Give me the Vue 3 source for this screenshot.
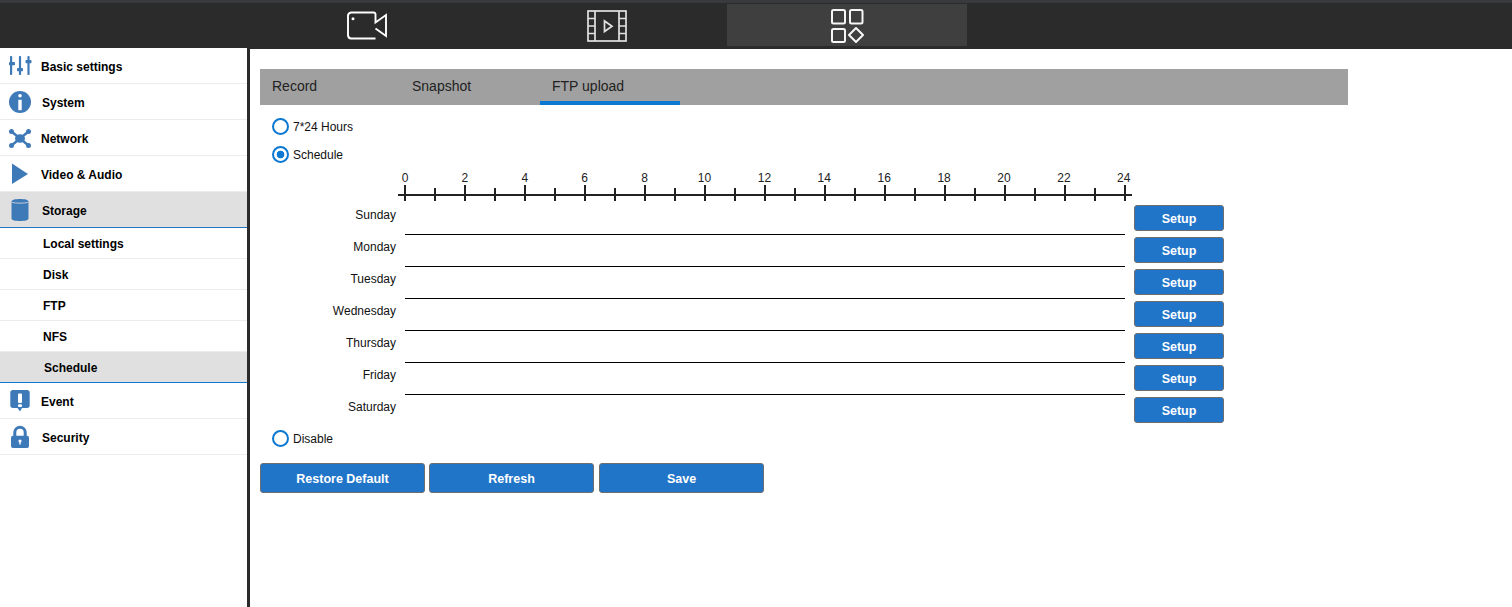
<script setup>
const days = ['Sunday', 'Monday', 'Tuesday', 'Wednesday', 'Thursday', 'Friday', 'Saturday']
const hours = Array.from({ length: 25 }, (_, i) => i)
const tabs = ['Record', 'Snapshot', 'FTP upload']
const subItems = [
  { label: 'Local settings' },
  { label: 'Disk' },
  { label: 'FTP' },
  { label: 'NFS' },
  { label: 'Schedule', active: true }
]
</script>

<template>
  <div class="page">
    <header class="topbar">
      <div class="topnav">
        <div class="navcell">
          <svg width="42" height="30" viewBox="0 0 42 30" fill="none" stroke="#fff" stroke-width="1.900">
            <path d="M29.500 28.500H5a3.500 3.500 0 0 1-3-3V5.500a3.500 3.500 0 0 1 3-3h22.500a2 2 0 0 1 2 2v8L40 5v21l-10.500-7.500" />
            <circle cx="7" cy="8.700" r="1.500" fill="#fff" stroke="none" />
          </svg>
        </div>
        <div class="navcell">
          <svg class="film" width="40" height="32" viewBox="0 0 40 32" fill="none" stroke="#e2e2e2" stroke-width="1.700">
            <rect x="1" y="1" width="38" height="30" />
            <path d="M8 1v30M32 1v30M1 8.500h7M1 16h7M1 23.500h7M32 8.500h7M32 16h7M32 23.500h7" />
            <path d="M17.500 11v10.500l7.500-5.250z" />
          </svg>
        </div>
        <div class="navcell navcell-active">
          <svg width="36" height="36" viewBox="0 0 36 36" fill="none" stroke="#f6f6f6" stroke-width="2">
            <rect x="3" y="3" width="13" height="13.500" rx="1.500" />
            <rect x="21" y="3" width="12.500" height="13.500" rx="1.500" />
            <rect x="3" y="22" width="13" height="13" rx="1.500" />
            <path d="M27 21l7 7-7 7-7-7z" stroke-linejoin="round" />
          </svg>
        </div>
      </div>
    </header>

    <div class="body">
      <aside class="sidebar">
        <div class="item">
          <svg class="icon" width="24" height="24" viewBox="0 0 24 24" fill="#3f7ab8">
            <rect x="2" y="2" width="2.200" height="19" rx=".8" />
            <rect x="10.900" y="2" width="2.200" height="19" rx=".8" />
            <rect x="19.400" y="2" width="2.200" height="19" rx=".8" />
            <rect x="1" y="8" width="6" height="3.200" rx=".8" /><rect x="9" y="14" width="6" height="3.200" rx=".8" /><rect x="17.500" y="6" width="6" height="3.200" rx=".8" />
          </svg>
          <span>Basic settings</span>
        </div>
        <div class="item">
          <svg class="icon" width="24" height="24" viewBox="0 0 24 24">
            <circle cx="12" cy="12" r="11" fill="#3f7ab8" />
            <circle cx="12" cy="5.800" r="1.800" fill="#fff" />
            <rect x="10.300" y="9.800" width="3.400" height="10.400" fill="#fff" />
          </svg>
          <span class="nudge">System</span>
        </div>
        <div class="item">
          <svg class="icon" width="24" height="24" viewBox="0 0 24 24" fill="#3f7ab8" stroke="#3f7ab8">
            <path d="M3.500 5.500l17 14M20.500 5.500l-17 14" stroke-width="2.400" />
            <ellipse cx="12" cy="12.500" rx="5" ry="4.300" stroke="none" />
            <circle cx="3.500" cy="5.500" r="2.500" stroke="none" /><circle cx="20.500" cy="5.500" r="2.500" stroke="none" />
            <circle cx="3.500" cy="19.500" r="2.500" stroke="none" /><circle cx="20.500" cy="19.500" r="2.500" stroke="none" />
          </svg>
          <span>Network</span>
        </div>
        <div class="item">
          <svg class="icon" width="24" height="24" viewBox="0 0 24 24" fill="#3f7ab8">
            <path d="M4 1.500L20 12 4 22z" />
          </svg>
          <span>Video &amp; Audio</span>
        </div>
        <div class="item item-open">
          <svg class="icon" width="24" height="24" viewBox="0 0 24 24" fill="#3f7ab8">
            <path d="M3.500 3.500c0-1.700 3.800-2.500 8.500-2.500s8.500.8 8.500 2.500v17c0 1.700-3.500 2.500-8.500 2.500s-8.500-.8-8.500-2.500z" />
            <path d="M3.500 4c1.500 1.500 15.500 1.500 17 0" fill="none" stroke="#e0e0e0" stroke-width=".8" />
          </svg>
          <span class="nudge">Storage</span>
        </div>
        <div
          v-for="sub in subItems"
          :key="sub.label"
          class="subitem"
          :class="{ 'subitem-active': sub.active }"
        >{{ sub.label }}</div>
        <div class="item">
          <svg class="icon" width="24" height="24" viewBox="0 0 24 24" fill="#3f7ab8">
            <path d="M5 1h14a2.700 2.700 0 0 1 2.700 2.700v12.600a2.700 2.700 0 0 1-2.700 2.700h-5l-2 3.500-2.500-3.500H5a2.700 2.700 0 0 1-2.700-2.700V3.700A2.700 2.700 0 0 1 5 1z" />
            <rect x="10" y="4.500" width="4" height="9.500" rx="1" fill="#fff" />
            <rect x="10" y="15.200" width="4" height="2.800" rx="1" fill="#fff" />
          </svg>
          <span>Event</span>
        </div>
        <div class="item">
          <svg class="icon" width="24" height="24" viewBox="0 0 24 24">
            <path d="M6.800 11.500V7.500a5.200 5.200 0 0 1 10.400 0v4" fill="none" stroke="#3f7ab8" stroke-width="3" />
            <rect x="3" y="10.700" width="18" height="12.300" rx="2" fill="#3f7ab8" />
            <circle cx="12" cy="16" r="1.600" fill="#fff" />
            <rect x="11.300" y="16" width="1.400" height="3.500" fill="#fff" />
          </svg>
          <span class="nudge">Security</span>
        </div>
      </aside>

      <main class="main">
        <nav class="tabs">
          <div
            v-for="(tab, i) in tabs"
            :key="tab"
            class="tab"
            :class="{ 'tab-active': i === 2 }"
          >{{ tab }}</div>
        </nav>

        <div class="options">
          <label class="radio"><span class="dot"></span>7*24 Hours</label>
          <label class="radio"><span class="dot dot-on"></span>Schedule</label>
        </div>

        <section class="schedule">
          <svg class="ruler" width="736" height="34" viewBox="0 0 736 34">
            <rect x="0" y="25" width="734" height="2" fill="#222" />
            <template v-for="h in hours" :key="h">
              <rect
                :x="6 + h * 30"
                :y="h % 2 ? 19 : 16"
                width="2"
                :height="h % 2 ? 13 : 16"
                fill="#222"
              />
              <text
                v-if="h % 2 === 0"
                :x="7 + h * 29.950"
                y="12.500"
                text-anchor="middle"
                class="hour"
              >{{ h }}</text>
            </template>
          </svg>

          <div v-for="day in days" :key="day" class="day">
            <div class="day-label">{{ day }}</div>
            <div class="day-track"></div>
            <button class="btn setup" type="button">Setup</button>
          </div>
        </section>

        <label class="radio"><span class="dot"></span>Disable</label>

        <div class="actions">
          <button class="btn action" type="button">Restore Default</button>
          <button class="btn action" type="button">Refresh</button>
          <button class="btn action action-last" type="button">Save</button>
        </div>
      </main>
    </div>
  </div>
</template>

<style scoped>
.page {
  width: 1512px;
  height: 607px;
  overflow: hidden;
  background: #fff;
  font-family: "Liberation Sans", Arial, sans-serif;
  color: #000;
}
.topbar {
  height: 48px;
  box-sizing: border-box;
  background: #2b2b2b;
  border-top: 3px solid #393a3e;
  padding-top: 1px;
}
.topnav {
  display: flex;
  padding-left: 247px;
}
.navcell {
  width: 240px;
  height: 42px;
  display: flex;
  align-items: center;
  justify-content: center;
}
.navcell-active {
  background: #3f3f3f;
}
.film {
  margin-top: 2px;
}
.body {
  display: flex;
  height: 559px;
}
.sidebar {
  width: 250px;
  flex: none;
  box-sizing: border-box;
  border-right: 3px solid #2b2b2b;
  background: #fff;
}
.item {
  height: 36px;
  box-sizing: border-box;
  display: flex;
  align-items: center;
  padding: 1px 0 0 8px;
  border-bottom: 1px solid #ececec;
  font-size: 12px;
  font-weight: 700;
}
.item span {
  margin: 2px 0 0 9px;
}
.item span.nudge {
  margin-left: 10px;
}
.item-open {
  background: #e0e0e0;
  border-bottom-color: #1f75c4;
}
.subitem {
  height: 31px;
  box-sizing: border-box;
  display: flex;
  align-items: center;
  padding: 1px 0 0 43px;
  border-bottom: 1px solid #ececec;
  font-size: 12px;
  font-weight: 700;
}
.subitem-active {
  background: #e0e0e0;
  border-bottom-color: #0c78d2;
  padding-left: 44px;
}
.main {
  flex: 1;
  border-top: 1px solid #2b2b2b;
  padding: 20px 0 0 10px;
  min-width: 0;
}
.tabs {
  width: 1088px;
  height: 36px;
  display: flex;
  background: #a0a0a0;
}
.tab {
  width: 140px;
  box-sizing: border-box;
  padding: 9px 0 0 12px;
  font-size: 14px;
  line-height: 16px;
  color: #222;
  border-bottom: 4px solid transparent;
}
.tab-active {
  border-bottom-color: #0c78d2;
}
.options {
  padding-top: 8px;
}
.radio {
  display: flex;
  align-items: center;
  height: 28px;
  padding-left: 12px;
  font-size: 12px;
  color: #111;
}
.dot {
  width: 17px;
  height: 17px;
  box-sizing: border-box;
  border: 2px solid #0c78d2;
  border-radius: 50%;
  margin: -1px 4px 0 0;
  flex: none;
  background: #fff;
}
.dot-on {
  background: radial-gradient(circle, #0c78d2 0 3.500px, #fff 4.200px);
}
.schedule {
  padding-left: 138px;
}
.ruler {
  display: block;
}
.hour {
  font-size: 12px;
  font-family: "Liberation Sans", Arial, sans-serif;
  fill: #222;
}
.day {
  display: flex;
  height: 32px;
  margin-left: -138px;
}
.day:last-child {
  height: 30px;
}
.day-label {
  width: 136px;
  line-height: 24px;
  text-align: right;
  font-size: 12px;
  color: #111;
}
.day-track {
  width: 720px;
  height: 32px;
  box-sizing: border-box;
  margin-left: 9px;
  border-bottom: 1px solid #000;
}
.day:last-child .day-track {
  height: 30px;
  border-bottom: 0;
}
.btn {
  box-sizing: border-box;
  background: #2175c9;
  color: #fff;
  border: 1px solid #6e6e6e;
  border-radius: 3px;
  font-family: inherit;
  font-size: 12.500px;
  font-weight: 700;
  padding: 1px 0 0;
}
.setup {
  width: 90px;
  height: 26px;
  margin: 2px 0 0 9px;
}
.actions {
  display: flex;
  gap: 4px;
  margin-top: 10px;
}
.action {
  width: 165px;
  height: 30px;
}
.action-last {
  margin-left: 1px;
}
</style>

<style>
html, body {
  margin: 0;
  background: #fff;
}
</style>
